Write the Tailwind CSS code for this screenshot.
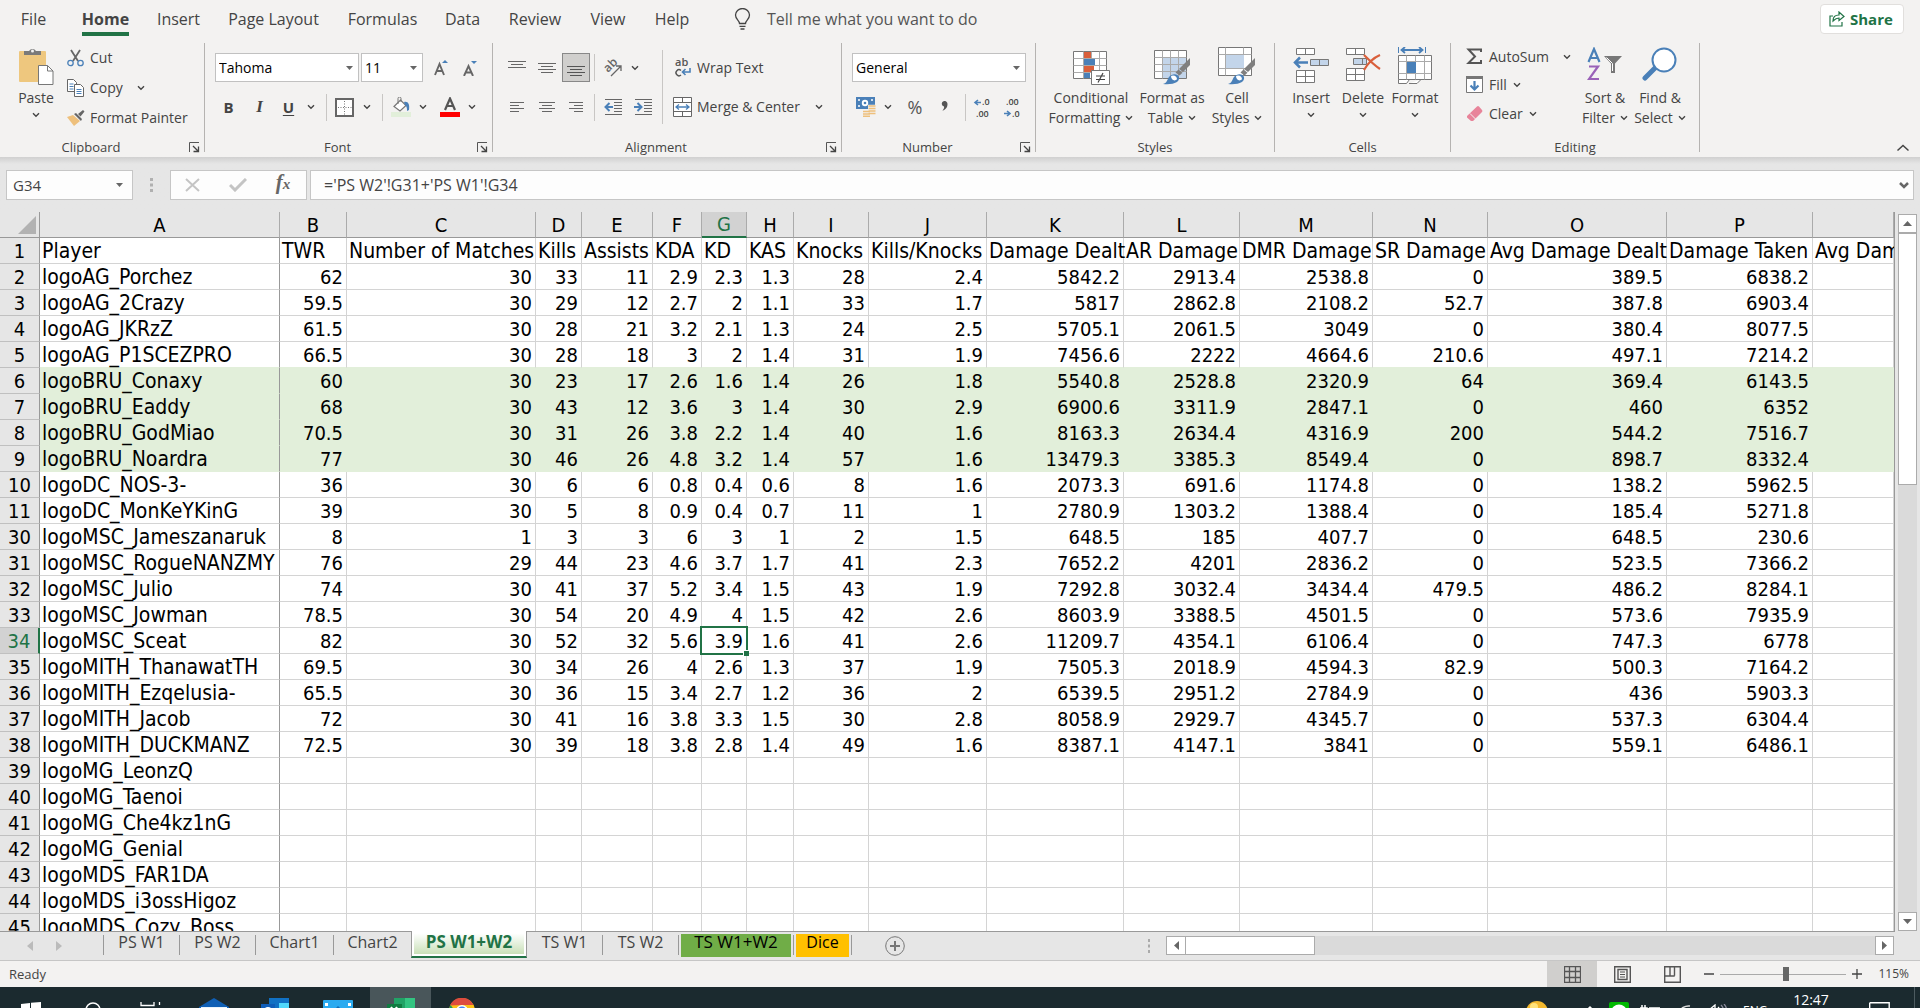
<!DOCTYPE html>
<html lang="en">
<head>
<meta charset="utf-8">
<title>Spreadsheet</title>
<script src="https://cdn.jsdelivr.net/npm/@tailwindcss/browser@4"></script>
</head>
<body class="flex h-screen flex-col overflow-hidden bg-[#e6e6e6] font-['Open_Sans','Noto_Sans',sans-serif] text-[14px] leading-5 text-[#444]">

<svg class="hidden" aria-hidden="true">
  <symbol id="chev" viewBox="0 0 8 6"><path d="M1 1.2l3 3 3-3" fill="none" stroke="#444" stroke-width="1.4"/></symbol>
  <symbol id="tri" viewBox="0 0 8 4"><path d="M0 0h7L3.500 4z" fill="#666"/></symbol>
  <symbol id="launch" viewBox="0 0 11 11"><path d="M.5 10V.5H10" fill="none" stroke="#555"/><path d="M4 4l5 5M9.500 4.500v5h-5" fill="none" stroke="#444" stroke-width="1.300"/></symbol>
  <symbol id="brush" viewBox="0 0 28 28"><path d="M27 1v7l-7 7-4-3z" fill="#7f7f7f"/><path d="M15.500 12.500l4 3.200-3 2.800-4-3z" fill="#7f7f7f"/><path d="M0 27c4-1 4-4 6-7 3-4 9-3.500 10 0 1 5-5 8-16 7z" fill="#4a80b8"/><path d="M8 19a4 4 0 0 1 6 3c-2 3-6 1-6-3z" fill="#fff"/></symbol>
</svg>

<header class="flex shrink-0 flex-col bg-[#f3f2f1]">
  <nav class="flex h-[43px] items-start text-[16px]" aria-label="Ribbon tabs">
    <button class="h-[38px] w-[67px]">File</button>
    <button class="flex h-[38px] w-[77px] items-center justify-center font-bold"><span class="relative">Home<span class="absolute inset-x-0 top-[23px] h-1 bg-[#217346]"></span></span></button>
    <button class="h-[38px] w-[69px]">Insert</button>
    <button class="h-[38px] w-[121px]">Page Layout</button>
    <button class="h-[38px] w-[97px]">Formulas</button>
    <button class="h-[38px] w-[63px]">Data</button>
    <button class="h-[38px] w-[82px]">Review</button>
    <button class="h-[38px] w-[64px]">View</button>
    <button class="h-[38px] w-[64px]">Help</button>
    <button class="ml-[30px] flex h-[38px] items-center gap-4 text-[#555]">
      <svg class="h-[22px] w-[17px]" viewBox="0 0 17 22" fill="none" stroke="#444" stroke-width="1.300"><path d="M5.500 15.500c0-3-4-4-4-8.500a7 6.500 0 0 1 14 0c0 4.500-4 5.500-4 8.500zM5.500 18.300h6M6.500 21h4"/></svg>
      Tell me what you want to do
    </button>
    <button class="mt-1 mr-4 ml-auto flex h-[30px] w-[84px] items-center gap-[5px] rounded border border-[#e1dfdd] bg-white pl-2 text-[15px] font-bold text-[#217346]">
      <svg class="h-4 w-4 shrink-0" viewBox="0 0 16 16" fill="none" stroke="#217346" stroke-width="1.200"><path d="M4 5H1v10h12v-4"/><path d="M4 10c0-4 2-6 6-6V1l5 4.500-5 4V7c-3 0-4 1-6 3z"/></svg>
      Share
    </button>
  </nav>

  <div class="flex h-[114px] pb-[5px]">
    <!-- Clipboard -->
    <section class="flex w-[205px] shrink-0 flex-col border-r border-[#b5b3b1]">
      <div class="flex h-[94px] shrink-0">
        <button class="ml-[9px] flex w-[54px] flex-col items-center pt-1">
          <svg class="h-[39px] w-[35px]" viewBox="0 0 35 39"><rect y="4" width="27" height="31" rx="1" fill="#eec77e"/><path d="M5 8V4h5a4 4 0 0 1 7 0h5v4z" fill="#7a7a7a"/><circle cx="13.500" cy="4" r="1.500" fill="#f3f2f1"/><path d="M19.500 18.500h9l5.500 5.500v13.500H19.500z" fill="#fff" stroke="#777"/><path d="M28.500 18.500V24H34" fill="none" stroke="#777"/></svg>
          <span class="mt-[2px]">Paste</span><svg class="mt-1 h-[6px] w-2"><use href="#chev"/></svg>
        </button>
        <div class="flex flex-col pl-[4px]">
          <button class="flex h-[30px] items-center gap-[6px]"><svg class="h-[18px] w-[17px]" viewBox="0 0 17 18" fill="none"><path d="M4 1l7 11M13 1L6 12" stroke="#666" stroke-width="1.800"/><circle cx="3.500" cy="14" r="2.700" stroke="#4a80b8" stroke-width="1.300"/><circle cx="13.500" cy="14" r="2.700" stroke="#4a80b8" stroke-width="1.300"/></svg>Cut</button>
          <button class="flex h-[30px] items-center gap-[6px]"><svg class="h-[18px] w-[17px]" viewBox="0 0 17 18"><path d="M.5.5h6l3 3v9h-9z" fill="#fff" stroke="#666"/><path d="M2.500 5h4M2.500 7.500h4M2.500 10h4" stroke="#4a80b8"/><path d="M7.500 5.500h6l3 3v9h-9z" fill="#fff" stroke="#666"/><path d="M9.500 10.500h5M9.500 12.500h5M9.500 14.500h5" stroke="#4a80b8"/></svg>Copy<svg class="ml-2 h-[6px] w-2"><use href="#chev"/></svg></button>
          <button class="flex h-[30px] items-center gap-[5px]"><svg class="h-[16px] w-[18px]" viewBox="0 0 18 16"><path d="M0 7l6-2 7 6-6 5z" fill="#eec07c"/><path d="M7 4l2-1 6 6-1 2zM11 4l5-4 1.500 1.500-4 5z" fill="#666"/></svg>Format Painter</button>
        </div>
      </div>
      <div class="flex items-center text-[13px] leading-[20px]"><span class="flex-1 text-center">Clipboard</span><button class="w-[22px] pl-[7px]" aria-label="Clipboard settings"><svg class="h-[11px] w-[11px]"><use href="#launch"/></svg></button></div>
    </section>

    <!-- Font -->
    <section class="flex w-[288px] shrink-0 flex-col border-r border-[#b5b3b1]">
      <div class="flex h-[94px] shrink-0 flex-col pl-[10px]">
        <div class="mt-[10px] flex h-[29px] items-center">
          <div class="relative"><select aria-label="Font name" class="h-[29px] w-[144px] appearance-none border border-[#c1c1c1] bg-white pl-[3px] text-black"><option>Tahoma</option></select><svg class="pointer-events-none absolute top-[13px] right-[5px] h-1 w-2"><use href="#tri"/></svg></div>
          <div class="relative ml-[2px]"><select aria-label="Font size" class="h-[29px] w-[62px] appearance-none border border-[#c1c1c1] bg-white pl-[3px] text-black"><option>11</option></select><svg class="pointer-events-none absolute top-[13px] right-[5px] h-1 w-2"><use href="#tri"/></svg></div>
          <button aria-label="Increase font size" class="ml-[11px]"><svg class="h-4 w-[15px]" viewBox="0 0 15 16"><path d="M1 15L5.500 4 10 15M2.500 11h6" fill="none" stroke="#666" stroke-width="1.900"/><path d="M8 3l3-3 3 3z" fill="#4a80b8"/></svg></button>
          <button aria-label="Decrease font size" class="ml-[14px]"><svg class="h-4 w-[15px]" viewBox="0 0 15 16"><path d="M1 16L5.500 6 10 16M2.500 12.500h6" fill="none" stroke="#666" stroke-width="1.900"/><path d="M8 1h6l-3 3z" fill="#4a80b8"/></svg></button>
        </div>
        <div class="mt-[11px] flex h-7 items-center">
          <button class="w-[27px] text-center text-[15px] font-bold">B</button>
          <button class="w-[35px] text-center font-['Liberation_Serif',serif] text-[17px] font-bold italic">I</button>
          <button class="w-[23px] text-center text-[15px] font-bold underline underline-offset-2">U</button>
          <button aria-label="Underline style" class="w-[26px] pl-[7px]"><svg class="h-[6px] w-2"><use href="#chev"/></svg></button>
          <span class="h-[27px] w-px bg-[#c8c6c4]"></span>
          <button aria-label="Borders" class="ml-2"><svg class="h-[19px] w-[19px]" viewBox="0 0 19 19"><rect x="1" y="1" width="17" height="17" fill="#fff" stroke="#666" stroke-width="2"/><path d="M9.500 3v14M3 9.500h14" stroke="#777" stroke-dasharray="1 1.500"/></svg></button>
          <button aria-label="Border style" class="w-[28px] pl-[9px]"><svg class="h-[6px] w-2"><use href="#chev"/></svg></button>
          <span class="h-[27px] w-px bg-[#c8c6c4]"></span>
          <button aria-label="Fill colour" class="ml-2"><svg class="h-5 w-5" viewBox="0 0 20 20"><path d="M3 9.500L9.500 3 15 8.500 9 14z" fill="#fff" stroke="#777" stroke-width="1.200"/><path d="M7 7V1.500a1.500 1.500 0 0 1 3 0V5" fill="none" stroke="#777"/><path d="M13 5c4-1 6 2 5 8l-2 1c0-3 0-4-2-6z" fill="#4a80b8"/><rect y="15" width="20" height="5" fill="#e2efda"/></svg></button>
          <button aria-label="Fill colours" class="w-[29px] pl-2"><svg class="h-[6px] w-2"><use href="#chev"/></svg></button>
          <button aria-label="Font colour"><svg class="h-5 w-5" viewBox="0 0 20 20"><path d="M5 13L10 1.500 15 13M6.500 9h7" fill="none" stroke="#555" stroke-width="2.200"/><rect y="15" width="20" height="5" fill="#f00"/></svg></button>
          <button aria-label="Font colours" class="pl-2"><svg class="h-[6px] w-2"><use href="#chev"/></svg></button>
        </div>
      </div>
      <div class="flex items-center text-[13px] leading-[20px]"><span class="flex-1 text-center">Font</span><button class="w-[22px] pl-[7px]" aria-label="Font settings"><svg class="h-[11px] w-[11px]"><use href="#launch"/></svg></button></div>
    </section>

    <!-- Alignment -->
    <section class="flex w-[349px] shrink-0 flex-col border-r border-[#b5b3b1]">
      <div class="flex h-[94px] shrink-0">
        <div class="flex w-[170px] flex-col border-r border-[#c8c6c4] mb-[13px] mt-[7px] pl-[9px]">
          <div class="mt-[3px] flex h-[29px] items-center">
            <button aria-label="Top align" class="grid w-[30px] place-items-center"><svg class="h-[18px] w-[18px]" viewBox="0 0 18 18" stroke="#666"><path d="M0 2.500h18M3 5.500h12M0 8.500h18"/></svg></button>
            <button aria-label="Middle align" class="grid w-[30px] place-items-center"><svg class="h-[18px] w-[18px]" viewBox="0 0 18 18" stroke="#666"><path d="M0 4.500h18M3 7.500h12M0 10.500h18M3 13.500h12"/></svg></button>
            <button aria-label="Bottom align" class="grid h-[29px] w-7 place-items-center border border-[#888] bg-[#d0cfcd]"><svg class="h-[18px] w-[18px]" viewBox="0 0 18 18" stroke="#555"><path d="M0 7.500h18M3 10.500h12M0 13.500h18M3 16.500h12"/></svg></button>
            <span class="ml-1 h-[27px] w-px bg-[#c8c6c4]"></span>
            <button aria-label="Orientation" class="ml-2 flex items-center gap-2"><svg class="h-[19px] w-[20px] overflow-visible" viewBox="0 0 20 19"><text x="0" y="0" transform="translate(5 15) rotate(-45)" class="text-[12px] font-semibold" fill="#666">ab</text><path d="M8 18L18 8M13 8h5v5" fill="none" stroke="#666" stroke-width="1.300"/></svg><svg class="h-[6px] w-2"><use href="#chev"/></svg></button>
          </div>
          <div class="mt-[11px] flex h-7 items-center">
            <button aria-label="Align left" class="grid w-[30px] place-items-center"><svg class="h-[18px] w-[14px]" viewBox="0 0 14 18" stroke="#666"><path d="M0 4.500h14M0 7.500h9M0 10.500h14M0 13.500h9"/></svg></button>
            <button aria-label="Centre" class="grid w-[30px] place-items-center"><svg class="h-[18px] w-[16px]" viewBox="0 0 16 18" stroke="#666"><path d="M0 4.500h16M3 7.500h10M0 10.500h16M3 13.500h10"/></svg></button>
            <button aria-label="Align right" class="grid w-7 place-items-center"><svg class="h-[18px] w-[14px]" viewBox="0 0 14 18" stroke="#666"><path d="M0 4.500h14M5 7.500h9M0 10.500h14M5 13.500h9"/></svg></button>
            <span class="ml-1 h-[27px] w-px bg-[#c8c6c4]"></span>
            <button aria-label="Decrease indent" class="ml-[9px]"><svg class="h-[18px] w-[18px]" viewBox="0 0 18 18"><path d="M1 1.500h17M10 4.500h8M10 7.500h8M10 10.500h8M10 13.500h8M1 16.500h17" stroke="#666"/><path d="M9 9H2M5.500 5L1.500 9l4 4" fill="none" stroke="#4a80b8" stroke-width="2"/></svg></button>
            <button aria-label="Increase indent" class="ml-3"><svg class="h-[18px] w-[18px]" viewBox="0 0 18 18"><path d="M1 1.500h17M10 4.500h8M10 7.500h8M10 10.500h8M10 13.500h8M1 16.500h17" stroke="#666"/><path d="M0 9h7M3.500 5l4 4-4 4" fill="none" stroke="#4a80b8" stroke-width="2"/></svg></button>
          </div>
        </div>
        <div class="flex flex-col pl-[10px]">
          <button class="mt-[10px] flex h-[29px] items-center gap-[5px]"><svg class="h-5 w-[19px] overflow-visible" viewBox="0 0 19 20"><text x="2" y="8" class="text-[11px] font-semibold" fill="#555">ab</text><path d="M8 12.500a3 3 0 1 0 0 4.500" fill="none" stroke="#555" stroke-width="1.400"/><path d="M17 10v4H10M12.500 11l-3 3 3 3" fill="none" stroke="#4a80b8" stroke-width="1.600"/></svg>Wrap Text</button>
          <button class="mt-[11px] flex h-7 items-center gap-[5px]"><svg class="h-5 w-[19px]" viewBox="0 0 19 20"><path d="M.5.5h18v19H.5zM.5 5.500h18M.5 14.500h18M9.500.5v5M9.500 14.500v5" fill="#fff" stroke="#666"/><path d="M3 10h13M6 7.500L3 10l3 2.500M13 7.500l3 2.500-3 2.500" fill="none" stroke="#4a80b8" stroke-width="1.300"/></svg>Merge &amp; Center<svg class="ml-[10px] h-[6px] w-2"><use href="#chev"/></svg></button>
        </div>
      </div>
      <div class="flex items-center text-[13px] leading-[20px]"><span class="flex-1 text-center">Alignment</span><button class="w-[22px] pl-[7px]" aria-label="Alignment settings"><svg class="h-[11px] w-[11px]"><use href="#launch"/></svg></button></div>
    </section>

    <!-- Number -->
    <section class="flex w-[194px] shrink-0 flex-col border-r border-[#b5b3b1]">
      <div class="flex h-[94px] shrink-0 flex-col pl-[10px]">
        <div class="relative mt-[10px] w-[174px]"><select aria-label="Number format" class="block h-[29px] w-full appearance-none border border-[#c1c1c1] bg-white pl-[3px] text-black"><option>General</option></select><svg class="pointer-events-none absolute top-[13px] right-[5px] h-1 w-2"><use href="#tri"/></svg></div>
        <div class="mt-[11px] flex h-7 items-center">
          <button aria-label="Accounting format" class="ml-1 flex items-center gap-2"><svg class="h-5 w-5" viewBox="0 0 20 20"><path d="M0 0h19v12H0z" fill="#4a80b8"/><path d="M2 3h2M15 3h2M2 9h2" stroke="#fff" stroke-width="1.500"/><circle cx="9" cy="6" r="3.200" fill="#fff"/><circle cx="9" cy="6" r="1.300" fill="#4a80b8"/><path d="M12 9h8M12 11.500h8M12 14h8M12 16.500h8M7 14.500h8M7 17h8M7 19.300h8" stroke="#f3f2f1" stroke-width="2.500"/><path d="M12.500 9h7M12.500 11.500h7M12.500 14h7M12.500 16.500h7M7 14.500h7M7 17h7M7 19.300h7" stroke="#eec07c" stroke-width="1.600"/></svg><svg class="h-[6px] w-2"><use href="#chev"/></svg></button>
          <button class="ml-[13px] w-[20px] text-[18px] text-[#555]">%</button>
          <button aria-label="Comma style" class="ml-[14px]"><svg class="h-3 w-3" viewBox="0 0 12 12"><path d="M5 0a3 3 0 0 1 3.500 3c0 4-2 5-5 7 1-2 2-3 1.500-4.500A2.800 2.800 0 0 1 5 0z" fill="#555"/></svg></button>
          <span class="ml-[14px] h-[27px] w-px bg-[#c8c6c4]"></span>
          <button aria-label="Increase decimal" class="ml-[8px]"><svg class="h-[19px] w-4 overflow-visible" viewBox="0 0 16 19"><path d="M7 4.500H1M4 2L1 4.500 4 7" fill="none" stroke="#4a80b8" stroke-width="1.600"/><text x="8" y="7" class="text-[9px] font-semibold" fill="#444">.0</text><text x="2" y="19" class="text-[9px] font-semibold" fill="#444">.00</text></svg></button>
          <button aria-label="Decrease decimal" class="ml-[14px]"><svg class="h-[19px] w-4 overflow-visible" viewBox="0 0 16 19"><path d="M0 15.500h6M3 13l3 2.500L3 18" fill="none" stroke="#4a80b8" stroke-width="1.600"/><text x="2" y="7" class="text-[9px] font-semibold" fill="#444">.00</text><text x="8" y="19" class="text-[9px] font-semibold" fill="#444">.0</text></svg></button>
        </div>
      </div>
      <div class="flex items-center text-[13px] leading-[20px]"><span class="flex-1 text-center">Number</span><button class="w-[22px] pl-[7px]" aria-label="Number settings"><svg class="h-[11px] w-[11px]"><use href="#launch"/></svg></button></div>
    </section>

    <!-- Styles -->
    <section class="flex w-[239px] shrink-0 flex-col border-r border-[#b5b3b1]">
      <div class="flex h-[94px] shrink-0 pl-[9px]">
        <button class="flex w-[92px] flex-col items-center pt-1">
          <svg class="h-[39px] w-[38px]" viewBox="0 0 38 39"><path d="M1.500 4.500h33v27h-33z" fill="#fff" stroke="#777"/><path d="M1.500 11.500h33M1.500 18.500h33M1.500 25.500h33M11.500 4.500v27M19.500 4.500v27M27.500 4.500v27" stroke="#aaa"/><path d="M12 5h7v6h-7zM12 19h10v6H12z" fill="#d95f3b"/><path d="M12 12h11v6H12zM12 26h6v5h-6z" fill="#4a80b8"/><path d="M19.500 23.500h18v14h-18z" fill="#fff" stroke="#777"/><path d="M24 29h9M24 32.500h9M31 26l-5 9.500" stroke="#444" stroke-width="1.200"/></svg>
          <span class="mt-[2px]">Conditional</span><span class="flex items-center gap-[5px]">Formatting<svg class="h-[6px] w-2"><use href="#chev"/></svg></span>
        </button>
        <button class="flex w-[70px] flex-col items-center pt-1">
          <svg class="h-[39px] w-[38px]" viewBox="0 0 38 39"><path d="M1.500 3.500h32v28h-32z" fill="#fff" stroke="#777"/><path d="M10 11h23v20H10z" fill="#c3d5ea"/><path d="M1.500 10.500h32M1.500 17.500h32M1.500 24.500h32M9.500 3.500v28M17.500 3.500v28M25.500 3.500v28" stroke="#aaa"/><use href="#brush" x="10" y="10" width="28" height="28"/></svg>
          <span class="mt-[2px] whitespace-nowrap">Format as</span><span class="flex items-center gap-[5px]">Table<svg class="h-[6px] w-2"><use href="#chev"/></svg></span>
        </button>
        <button class="flex w-[60px] flex-col items-center pt-1">
          <svg class="h-[39px] w-[38px]" viewBox="0 0 38 39"><path d="M.5.5h33v28H.5z" fill="#fff" stroke="#777"/><path d="M.5 7.500h33M.5 21.500h33M7.500.5v28M25.500.5v28" stroke="#aaa"/><path d="M8 8h18v13H8z" fill="#c3d5ea"/><use href="#brush" x="10" y="10" width="28" height="28"/></svg>
          <span class="mt-[2px]">Cell</span><span class="flex items-center gap-[5px]">Styles<svg class="h-[6px] w-2"><use href="#chev"/></svg></span>
        </button>
      </div>
      <div class="text-center text-[13px] leading-[20px]">Styles</div>
    </section>

    <!-- Cells -->
    <section class="flex w-[176px] shrink-0 flex-col border-r border-[#b5b3b1]">
      <div class="flex h-[94px] shrink-0 pl-[10px]">
        <button class="flex w-[52px] flex-col items-center pt-1">
          <svg class="h-[39px] w-[36px]" viewBox="0 0 36 39"><path d="M3.500 1.500h18v6h-18zM12.500 1.500v6M3.500 23.500h18v12h-18zM12.500 23.500v12M3.500 29.500h18" fill="#fff" stroke="#777"/><path d="M17.500 12.500h18v6h-18zM26.500 12.500v6" fill="#c3d5ea" stroke="#777"/><path d="M15 15.500H2M7 10.500l-5 5 5 5" fill="none" stroke="#4a80b8" stroke-width="2.500"/></svg>
          <span class="mt-[2px]">Insert</span><svg class="mt-1 h-[6px] w-2"><use href="#chev"/></svg>
        </button>
        <button class="flex w-[52px] flex-col items-center pt-1">
          <svg class="h-[39px] w-[36px]" viewBox="0 0 36 39"><path d="M1.500 1.500h18v6h-18zM10.500 1.500v6M1.500 21.500h18v12h-18zM10.500 21.500v12M1.500 27.500h18" fill="#fff" stroke="#777"/><path d="M8.500 11.500h13v6h-13zM17.500 11.500v6" fill="#c3d5ea" stroke="#777"/><path d="M19 8c5 5 10 10 16 14M35 8c-7 3-12 8-16 15" fill="none" stroke="#d95f3b" stroke-width="2.200"/></svg>
          <span class="mt-[2px]">Delete</span><svg class="mt-1 h-[6px] w-2"><use href="#chev"/></svg>
        </button>
        <button class="flex w-[52px] flex-col items-center pt-1">
          <svg class="h-[39px] w-[36px]" viewBox="0 0 36 39"><path d="M1.500 0v6M28.500 0v6" stroke="#4a80b8"/><path d="M4 3h22M8 0L4.500 3 8 6M22 0l3.500 3L22 6" fill="none" stroke="#4a80b8" stroke-width="1.800"/><path d="M1.500 8.500h33v24h-33zM1.500 32.500v4h8l3-4M12 36.500h8l4-4" fill="#fff" stroke="#777"/><path d="M1.500 14.500h33M1.500 26.500h33M9.500 8.500v24M18.500 8.500v24M27.500 8.500v24" stroke="#aaa"/><path d="M10 15h9v11h-9z" fill="#4a80b8"/></svg>
          <span class="mt-[2px]">Format</span><svg class="mt-1 h-[6px] w-2"><use href="#chev"/></svg>
        </button>
      </div>
      <div class="text-center text-[13px] leading-[20px]">Cells</div>
    </section>

    <!-- Editing -->
    <section class="flex w-[249px] shrink-0 flex-col border-r border-[#b5b3b1]">
      <div class="flex h-[94px] shrink-0 pl-[15px]">
        <div class="mr-[7px] flex w-[105px] flex-col">
          <button class="flex h-[27px] items-center gap-[6px]"><svg class="h-[17px] w-[17px]" viewBox="0 0 17 17"><path d="M15 4V1.500H2.500L9 8.500l-6.500 6.500H15V12" fill="none" stroke="#555" stroke-width="2"/></svg>AutoSum<svg class="ml-auto h-[6px] w-2"><use href="#chev"/></svg></button>
          <button class="flex h-[29px] items-center gap-[6px]"><svg class="h-[17px] w-[17px]" viewBox="0 0 17 17"><path d="M.5.5h16v16H.5z" fill="#fff" stroke="#777"/><path d="M0 0h17v3H0z" fill="#777"/><path d="M8.500 5v8M4.500 9.500l4 4 4-4" fill="none" stroke="#4a80b8" stroke-width="2.200"/></svg>Fill<svg class="h-[6px] w-2"><use href="#chev"/></svg></button>
          <button class="flex h-[29px] items-center gap-[6px]"><svg class="h-[17px] w-[17px]" viewBox="0 0 17 17"><path d="M1 11L11 1.500a1.500 1.500 0 0 1 2 0L16 5a1.500 1.500 0 0 1 0 2L7 16H5l-4-3.500z" fill="#e8849a"/><path d="M4 8.500l5.500 5.500" stroke="#f3f2f1"/></svg>Clear<svg class="h-[6px] w-2"><use href="#chev"/></svg></button>
        </div>
        <button class="flex w-[54px] flex-col items-center pt-1">
          <svg class="h-[39px] w-[36px]" viewBox="0 0 36 39" fill="none"><path d="M1.500 15L7 2l5.500 13M3 11h8" stroke="#4a80b8" stroke-width="2.200"/><path d="M2 19.500h9L2 32h10" stroke="#9a62b8" stroke-width="2.200"/><path d="M17 9h18l-7 7.500V26h-4v-9.500z" fill="#777"/><path d="M19.500 10.500l6 6V24" stroke="#fff"/></svg>
          <span class="mt-[2px] whitespace-nowrap">Sort &amp;</span><span class="flex items-center gap-[5px]">Filter<svg class="h-[6px] w-2"><use href="#chev"/></svg></span>
        </button>
        <button class="flex w-[56px] flex-col items-center pt-1">
          <svg class="h-[39px] w-[36px]" viewBox="0 0 36 39"><path d="M13 21L3 31" stroke="#4a80b8" stroke-width="5" stroke-linecap="round"/><circle cx="22" cy="13" r="11.500" fill="#fff" stroke="#4a80b8" stroke-width="2"/></svg>
          <span class="mt-[2px] whitespace-nowrap">Find &amp;</span><span class="flex items-center gap-[5px]">Select<svg class="h-[6px] w-2"><use href="#chev"/></svg></span>
        </button>
      </div>
      <div class="text-center text-[13px] leading-[20px]">Editing</div>
    </section>
    <button class="mr-[10px] ml-auto self-end" aria-label="Collapse ribbon"><svg class="h-2 w-[14px]" viewBox="0 0 14 8"><path d="M1.500 6.500L7 1.500l5.500 5" fill="none" stroke="#444" stroke-width="1.500"/></svg></button>
  </div>
</header>

<!-- Formula bar -->
<div class="flex h-[55px] shrink-0 bg-linear-to-b from-[#d0d0d0] to-[#e6e6e6] to-[7px] pt-[13px] pr-[6px] pl-[6px]">
  <div class="flex h-[30px] w-[127px] shrink-0 items-center border border-[#c6c6c6] bg-[#fdfdfd] pr-2">
    <input aria-label="Name box" value="G34" class="w-0 flex-1 bg-transparent pl-[6px] text-[15px] outline-none">
    <button aria-label="Name list"><svg class="h-1 w-2"><use href="#tri"/></svg></button>
  </div>
  <div class="grid h-[30px] w-[37px] shrink-0 place-items-center"><svg class="h-[14px] w-[3px]" viewBox="0 0 3 14"><path d="M0 0h3v3H0zM0 5.500h3v3H0zM0 11h3v3H0z" fill="#b0b0b0"/></svg></div>
  <div class="flex h-[30px] w-[137px] shrink-0 items-center border border-[#c6c6c6] bg-[#fdfdfd] pl-[14px]">
    <button aria-label="Cancel"><svg class="h-[14px] w-4" viewBox="0 0 16 14"><path d="M1 1l13 12M14 1L1 13" stroke="#c4c4c4" stroke-width="2"/></svg></button>
    <button aria-label="Enter" class="ml-[28px]"><svg class="h-[14px] w-[18px]" viewBox="0 0 18 14"><path d="M1 7l5 5L17 1" fill="none" stroke="#c4c4c4" stroke-width="3"/></svg></button>
    <button aria-label="Insert function" class="ml-[24px] w-[24px] pb-1 font-['Liberation_Serif',serif] text-[21px] font-bold italic text-[#666]">f<span class="text-[15px]">x</span></button>
  </div>
  <div class="ml-[3px] flex h-[30px] flex-1 items-center border border-[#c6c6c6] bg-[#fdfdfd] pr-[4px]">
    <input aria-label="Formula" value="='PS W2'!G31+'PS W1'!G34" class="w-0 flex-1 bg-transparent pl-[13px] text-[16px] outline-none">
    <button aria-label="Expand formula bar"><svg class="h-[7px] w-[10px]" viewBox="0 0 10 7"><path d="M1 1l4 4 4-4" fill="none" stroke="#666" stroke-width="2.500"/></svg></button>
  </div>
</div>

<!-- Sheet -->
<main class="flex min-h-0 flex-1 overflow-hidden">
  <div class="h-full min-w-0 flex-1 overflow-hidden border-r border-[#999]">
    <table class="w-full table-fixed border-separate border-spacing-0 font-['DejaVu_Sans_Condensed','DejaVu_Sans',sans-serif] text-[20px] leading-[24px] font-normal text-black">
      <colgroup id="cols"></colgroup>
      <thead><tr id="letters"></tr></thead>
      <tbody id="rows"></tbody>
    </table>
  </div>
  <div class="flex w-[25px] shrink-0 flex-col pt-[2px] pl-[3px]">
    <button aria-label="Scroll up" class="grid h-[19px] w-[19px] place-items-center border border-[#ababab] bg-white"><svg class="h-[5px] w-[9px]" viewBox="0 0 9 5"><path d="M0 5h9L4.500 0z" fill="#666"/></svg></button>
    <div class="flex w-[19px] flex-1 flex-col bg-[#dadada]"><div class="h-[252px] border border-[#ababab] bg-white"></div></div>
    <button aria-label="Scroll down" class="grid h-[19px] w-[19px] place-items-center border border-[#ababab] bg-white"><svg class="h-[5px] w-[9px]" viewBox="0 0 9 5"><path d="M0 0h9L4.500 5z" fill="#666"/></svg></button>
  </div>
</main>

<!-- Sheet tabs -->
<div class="flex h-[30px] shrink-0 border-b border-[#c6c6c6] text-[16px]">
  <div class="flex min-w-0 flex-1 items-start border-t border-[#999] mr-[25px]">
    <div class="flex h-[27px] w-[103px] items-center pl-[27px]">
      <button aria-label="Previous sheet"><svg class="h-[10px] w-[6px]" viewBox="0 0 6 10"><path d="M6 0v10L0 5z" fill="#bbb"/></svg></button>
      <button aria-label="Next sheet" class="ml-[23px]"><svg class="h-[10px] w-[6px]" viewBox="0 0 6 10"><path d="M0 0v10l6-5z" fill="#bbb"/></svg></button>
    </div>
    <button class="mt-[3px] h-5 w-[76px] border-l border-[#999] pb-[6px] leading-[14px]">PS W1</button>
    <button class="mt-[3px] h-5 w-[76px] border-l border-[#999] pb-[6px] leading-[14px]">PS W2</button>
    <button class="mt-[3px] h-5 w-[78px] border-l border-[#999] pb-[6px] leading-[14px]">Chart1</button>
    <button class="mt-[3px] h-5 w-[78px] border-l border-[#999] pb-[6px] leading-[14px]">Chart2</button>
    <button class="-mt-px h-[27px] w-[116px] border-x border-b-2 border-x-[#999] border-b-[#217346] bg-white px-[2px] pb-[2px] text-[17px] font-bold text-[#217346]"><span class="block h-full bg-linear-to-b from-white from-10% to-[#c9e0b8] leading-[22px]">PS W1+W2</span></button>
    <button class="mt-[3px] h-5 w-[76px] border-r border-[#999] pb-[6px] leading-[14px]">TS W1</button>
    <button class="mt-[3px] h-5 w-[76px] border-r border-[#999] pb-[6px] leading-[14px]">TS W2</button>
    <button class="mt-[2px] ml-[2px] h-[23px] w-[110px] bg-[#70ad47] pb-[7px] text-[17px] leading-[16px] text-black">TS W1+W2</button>
    <span class="mt-[3px] ml-[2px] h-5 w-px bg-[#999]"></span>
    <button class="mt-[2px] ml-[2px] h-[23px] w-[53px] bg-[#ffc000] pb-[7px] leading-[16px] text-black">Dice</button>
    <span class="mt-[3px] ml-[2px] h-5 w-px bg-[#999]"></span>
    <button aria-label="New sheet" class="mt-[4px] ml-[33px]"><svg class="h-5 w-5" viewBox="0 0 20 20" fill="none" stroke="#777"><circle cx="10" cy="10" r="9.300"/><path d="M10 5v10M5 10h10" stroke-width="2"/></svg></button>
    <div class="mt-1 ml-auto flex items-center">
      <svg class="mr-[16px] h-[14px] w-[2px]" viewBox="0 0 2 14"><path d="M0 0h2v3H0zM0 5.500h2v3H0zM0 11h2v3H0z" fill="#aaa"/></svg>
      <div class="mr-[1px] flex h-[19px] w-[728px] bg-[#dadada]">
        <button aria-label="Scroll left" class="grid w-[20px] place-items-center border border-[#ababab] bg-white"><svg class="h-[9px] w-[5px]" viewBox="0 0 5 9"><path d="M5 0v9L0 4.500z" fill="#666"/></svg></button>
        <div class="-ml-px w-[130px] border border-[#ababab] bg-white"></div>
        <button aria-label="Scroll right" class="ml-auto grid w-[19px] place-items-center border border-[#ababab] bg-white"><svg class="h-[9px] w-[5px]" viewBox="0 0 5 9"><path d="M0 0v9l5-4.500z" fill="#666"/></svg></button>
      </div>
    </div>
  </div>
</div>

<!-- Status bar -->
<div class="flex h-[26px] shrink-0 items-center bg-[#f3f2f1] pl-[9px] text-[13px]">
  <span>Ready</span>
  <button aria-label="Normal view" class="ml-auto grid h-full w-[50px] place-items-center bg-[#d0cfcd]"><svg class="h-[17px] w-[17px]" viewBox="0 0 17 17"><path d="M.5.5h16v16H.5zM.5 5.500h16M.5 11.500h16M5.500.5v16M11.500.5v16" fill="none" stroke="#555" stroke-width="1.300"/></svg></button>
  <button aria-label="Page layout view" class="grid w-[50px] place-items-center"><svg class="h-[17px] w-[17px]" viewBox="0 0 17 17"><path d="M.7.7h15.600v15.600H.7zM4 3.500h9v10H4z" fill="none" stroke="#555" stroke-width="1.400"/><path d="M6 6h5M6 8.500h5M6 11h5" stroke="#555"/></svg></button>
  <button aria-label="Page break view" class="grid w-[50px] place-items-center"><svg class="h-[17px] w-[17px]" viewBox="0 0 17 17"><path d="M.7.7h15.600v15.600H.7zM6 .7v9M10.500.7v9M.7 10h10" fill="none" stroke="#555" stroke-width="1.400"/></svg></button>
  <button aria-label="Zoom out" class="ml-[7px]"><svg class="h-[10px] w-[10px]" viewBox="0 0 10 10"><path d="M0 5h10" stroke="#444" stroke-width="1.500"/></svg></button>
  <input type="range" aria-label="Zoom" min="10" max="400" value="214" class="mx-[6px] h-4 w-[126px] appearance-none bg-[linear-gradient(#aaa,#aaa)] bg-[length:100%_1px] bg-center bg-no-repeat [&::-webkit-slider-thumb]:h-[14px] [&::-webkit-slider-thumb]:w-[6px] [&::-webkit-slider-thumb]:appearance-none [&::-webkit-slider-thumb]:bg-[#666]">
  <button aria-label="Zoom in"><svg class="h-[10px] w-[10px]" viewBox="0 0 10 10"><path d="M0 5h10M5 0v10" stroke="#444" stroke-width="1.300"/></svg></button>
  <span class="w-[58px] pr-[11px] text-right text-[12px]">115%</span>
</div>

<!-- Taskbar -->
<footer class="flex h-[21px] shrink-0 items-start overflow-hidden bg-[#1b2a2f] text-white">
  <button aria-label="Start" class="flex w-[61px] justify-center pt-[15px]"><svg class="h-5 w-5" viewBox="0 0 20 20" fill="#fff"><path d="M0 2l9-1v8.500H0zM10 .8L20 0v9.500H10z"/></svg></button>
  <button aria-label="Search" class="flex w-[61px] justify-center pt-[15px]"><svg class="h-5 w-5" viewBox="0 0 20 20"><circle cx="11" cy="8" r="7" fill="none" stroke="#fff" stroke-width="1.500"/></svg></button>
  <button aria-label="Task view" class="flex w-[57px] justify-center pt-[15px]"><svg class="h-5 w-6" viewBox="0 0 24 20" fill="none" stroke="#fff" stroke-width="1.300"><path d="M2 0v3.500h13V0M2 20V8h13v12M20.500 0v3M20.500 6v14"/></svg></button>
  <button aria-label="Mail" class="ml-1 flex w-[61px] justify-center pt-[11px]"><svg class="h-6 w-[30px]" viewBox="0 0 30 24"><path d="M0 9L15 0l15 9v15H0z" fill="#0f5fb5"/><path d="M2 9h26v10H2z" fill="#e8f2fb"/></svg></button>
  <button aria-label="Outlook" class="flex w-[61px] justify-center pt-[11px]"><svg class="h-6 w-7" viewBox="0 0 28 24"><path d="M8 0h20v24H8z" fill="#1171c4"/><path d="M18 5h10v7H18z" fill="#51d8fb"/><path d="M0 6h14v18H0z" fill="#0f5db8"/><circle cx="7" cy="14" r="4" fill="none" stroke="#fff" stroke-width="2"/></svg></button>
  <button aria-label="Viewer" class="flex w-[65px] justify-center pt-[13px]"><svg class="h-6 w-[30px]" viewBox="0 0 30 24"><rect width="30" height="24" rx="1" fill="#2aaaf0"/><path d="M2 3h3v3H2zM25 3h3v3h-3z" fill="#fff"/><path d="M12 9l3-3 3 3z" fill="#0f6ab5"/></svg></button>
  <button aria-label="Spreadsheet" class="flex h-full w-[61px] justify-center bg-[#49565a] pt-[11px]"><svg class="h-6 w-7" viewBox="0 0 28 24"><path d="M7 0h11v24H7z" fill="#21a366"/><path d="M18 0h10v10H18z" fill="#33c481"/><path d="M0 6h15v18H0z" fill="#107c41"/><path d="M4 9l6 8M10 9l-6 8" stroke="#fff" stroke-width="2"/></svg></button>
  <button aria-label="Browser" class="flex w-[61px] justify-center pt-[11px]"><svg class="h-[26px] w-[26px]" viewBox="0 0 26 26"><circle cx="13" cy="13" r="13" fill="#fbc116"/><path d="M1 7.500A13 13 0 0 1 24.500 7H13z" fill="#dd4b3e"/><path d="M1.500 7A13 13 0 0 0 13 26l-6-12z" fill="#1e9a55"/><circle cx="13" cy="13" r="6" fill="#fff"/><circle cx="13" cy="13" r="4.500" fill="#4285f4"/></svg></button>
  <div class="ml-auto flex items-start">
    <svg class="mt-[14px] mr-[8px] h-6 w-[22px]" viewBox="0 0 22 24"><circle cx="11" cy="11" r="11" fill="#f4b92f"/><circle cx="8" cy="6" r="4" fill="#ffe27a"/></svg>
    <svg class="mt-[18px] ml-[28px] h-2 w-3" viewBox="0 0 12 8"><path d="M1 7l5-5 5 5" fill="none" stroke="#fff" stroke-width="1.500"/></svg>
    <svg class="mt-[15px] ml-[13px] h-5 w-5" viewBox="0 0 20 20"><rect width="20" height="20" rx="2" fill="#00b900"/><ellipse cx="10" cy="9" rx="7.500" ry="6.500" fill="#fff"/></svg>
    <svg class="mt-[18px] ml-[11px] h-3 w-5" viewBox="0 0 20 12" fill="none" stroke="#fff" stroke-width="1.500"><path d="M2 0v4M5 0v4M0 3h7v4M9 3h11v8"/></svg>
    <svg class="mt-[18px] ml-[18px] h-3 w-4" viewBox="0 0 16 12" fill="none" stroke="#ddd" stroke-width="1.500"><path d="M1 8A10 10 0 0 1 12 1"/></svg>
    <svg class="mt-[17px] ml-[14px] h-3 w-5" viewBox="0 0 20 12" fill="none" stroke="#fff" stroke-width="1.300"><path d="M1 6l6-5v10M10 3c2 2 2 4 1 6"/><path d="M13 1c3 3 3 6 1 9M16 0c3 3 3 7 1 11" stroke="#889"/></svg>
    <span class="mt-[16px] ml-[15px] w-[32px] text-[12px] leading-4">ENG</span>
    <span class="mt-[4px] ml-[16px] w-[40px] text-center text-[14px] leading-[18px]">12:47</span>
    <svg class="mt-[15px] ml-[38px] h-4 w-[21px]" viewBox="0 0 21 16"><path d="M.7.7h19.500V16M.7.7V16" fill="none" stroke="#fff" stroke-width="1.400"/></svg>
    <span class="ml-[24px] h-[21px] w-px bg-[#4d5b60]"></span>
    <span class="w-[5px]"></span>
  </div>
</footer>

<script>
const widths = [40, 240, 67, 189, 46, 71, 49, 45, 47, 75, 118, 137, 116, 133, 115, 179, 146];
const data = `1|Player|TWR|Number of Matches|Kills|Assists|KDA|KD|KAS|Knocks|Kills/Knocks|Damage Dealt|AR Damage|DMR Damage|SR Damage|Avg Damage Dealt|Damage Taken|Avg Damage Taken
2|logoAG_Porchez|62|30|33|11|2.9|2.3|1.3|28|2.4|5842.2|2913.4|2538.8|0|389.5|6838.2
3|logoAG_2Crazy|59.5|30|29|12|2.7|2|1.1|33|1.7|5817|2862.8|2108.2|52.7|387.8|6903.4
4|logoAG_JKRzZ|61.5|30|28|21|3.2|2.1|1.3|24|2.5|5705.1|2061.5|3049|0|380.4|8077.5
5|logoAG_P1SCEZPRO|66.5|30|28|18|3|2|1.4|31|1.9|7456.6|2222|4664.6|210.6|497.1|7214.2
6|logoBRU_Conaxy|60|30|23|17|2.6|1.6|1.4|26|1.8|5540.8|2528.8|2320.9|64|369.4|6143.5
7|logoBRU_Eaddy|68|30|43|12|3.6|3|1.4|30|2.9|6900.6|3311.9|2847.1|0|460|6352
8|logoBRU_GodMiao|70.5|30|31|26|3.8|2.2|1.4|40|1.6|8163.3|2634.4|4316.9|200|544.2|7516.7
9|logoBRU_Noardra|77|30|46|26|4.8|3.2|1.4|57|1.6|13479.3|3385.3|8549.4|0|898.7|8332.4
10|logoDC_NOS-3-|36|30|6|6|0.8|0.4|0.6|8|1.6|2073.3|691.6|1174.8|0|138.2|5962.5
11|logoDC_MonKeYKinG|39|30|5|8|0.9|0.4|0.7|11|1|2780.9|1303.2|1388.4|0|185.4|5271.8
30|logoMSC_Jameszanaruk|8|1|3|3|6|3|1|2|1.5|648.5|185|407.7|0|648.5|230.6
31|logoMSC_RogueNANZMY|76|29|44|23|4.6|3.7|1.7|41|2.3|7652.2|4201|2836.2|0|523.5|7366.2
32|logoMSC_Julio|74|30|41|37|5.2|3.4|1.5|43|1.9|7292.8|3032.4|3434.4|479.5|486.2|8284.1
33|logoMSC_Jowman|78.5|30|54|20|4.9|4|1.5|42|2.6|8603.9|3388.5|4501.5|0|573.6|7935.9
34|logoMSC_Sceat|82|30|52|32|5.6|3.9|1.6|41|2.6|11209.7|4354.1|6106.4|0|747.3|6778
35|logoMITH_ThanawatTH|69.5|30|34|26|4|2.6|1.3|37|1.9|7505.3|2018.9|4594.3|82.9|500.3|7164.2
36|logoMITH_Ezqelusia-|65.5|30|36|15|3.4|2.7|1.2|36|2|6539.5|2951.2|2784.9|0|436|5903.3
37|logoMITH_Jacob|72|30|41|16|3.8|3.3|1.5|30|2.8|8058.9|2929.7|4345.7|0|537.3|6304.4
38|logoMITH_DUCKMANZ|72.5|30|39|18|3.8|2.8|1.4|49|1.6|8387.1|4147.1|3841|0|559.1|6486.1
39|logoMG_LeonzQ
40|logoMG_Taenoi
41|logoMG_Che4kz1nG
42|logoMG_Genial
43|logoMDS_FAR1DA
44|logoMDS_i3ossHigoz
45|logoMDS_Cozy_Boss`.split('\n').map(l => l.split('|'));

document.getElementById('cols').innerHTML = widths.map(w => `<col style="width:${w}px">`).join('') + '<col>';

const corner = '<th class="h-[26px] border-r border-b border-[#999] p-0"><svg class="mr-[3px] ml-auto h-[18px] w-[18px]" viewBox="0 0 18 18"><path d="M18 0v18H0z" fill="#b2b2b2"/></svg></th>';
document.getElementById('letters').innerHTML = corner + [...'ABCDEFGHIJKLMNOP', ''].map(c => {
  const look = c === 'G' ? 'bg-[#d2d2d2] border-b-2 border-b-[#217346] text-[#217346] pt-0' : 'border-b border-b-[#999] pt-[1px]';
  return `<th scope="col" class="h-[26px] border-r border-r-[#ababab] px-0 pb-0 text-center font-normal ${look}">${c}</th>`;
}).join('');

document.getElementById('rows').innerHTML = data.map(r => {
  const n = +r[0];
  const green = n >= 6 && n <= 9;
  const fill = green ? 'bg-[#e2efda]' : 'bg-white';
  const below = green || n === 5 ? 'border-b-[#e2efda]' : 'border-b-[#d4d4d4]';
  const head = n === 34 ? 'bg-[#d2d2d2] text-[#217346] border-r-2 border-r-[#217346] border-b-[#c0c0c0]' : 'border-r border-r-[#999] border-b-[#c0c0c0]';
  let html = `<th scope="row" class="h-[26px] border-b px-0 pt-[1px] pb-0 text-center font-normal ${head}">${r[0]}</th>`;
  for (let i = 1; i < 18; i++) {
    const align = i === 1 || n === 1 ? 'pl-[2px] text-left text-[21px]' : 'pr-[3px] text-right';
    const side = i === 1 ? 'border-r-[#999]' : green ? 'border-r-[#e2efda]' : 'border-r-[#d4d4d4]';
    const sel = n === 34 && i === 7;
    const box = sel ? '<span class="absolute -top-[2px] -right-[2px] -bottom-[2px] -left-[2px] border-2 border-[#217346]"></span><span class="absolute -right-[3px] -bottom-[3px] h-[6px] w-[6px] border-t border-l border-white bg-[#217346]"></span>' : '';
    const place = sel ? 'relative' : '';
    html += `<td class="h-[26px] border-r border-b pt-[1px] pb-0 leading-[24px] whitespace-nowrap ${fill} ${below} ${side} ${align} ${place}">${r[i] || ''}${box}</td>`;
  }
  return `<tr>${html}</tr>`;
}).join('');
</script>
</body>
</html>
